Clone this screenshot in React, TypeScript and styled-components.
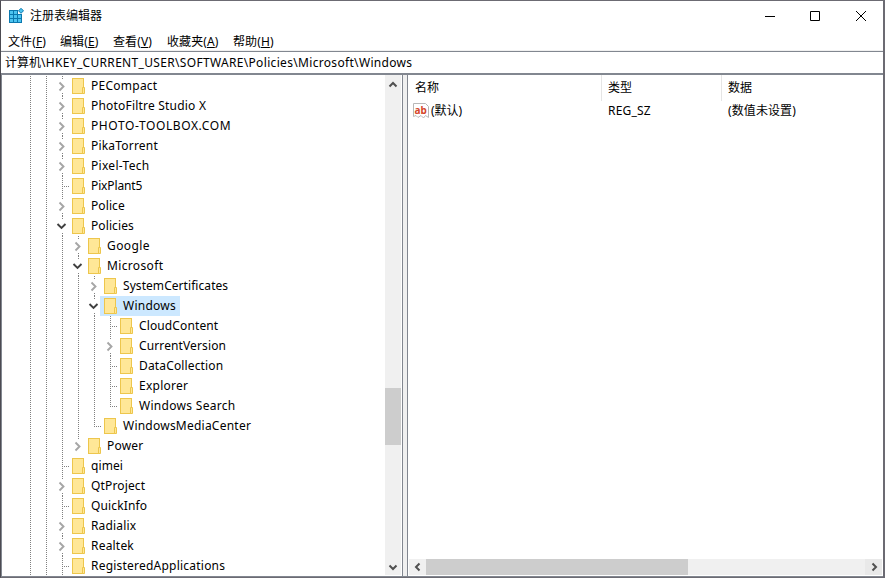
import React from "react";
import styled, { createGlobalStyle } from "styled-components";

const Global = createGlobalStyle`
  * { box-sizing: border-box; }
  body { margin: 0; background: #fff; }
`;

const Window = styled.div`
  width: 885px; height: 578px; display: flex; flex-direction: column; overflow: hidden;
  background: #fff; color: #000; border: 1px solid #6c6b73; border-left-color: #4c4b52;
  border-bottom-width: 1px; border-right-width: 2px;
  font: 12px "Noto Sans", "Noto Sans CJK SC", sans-serif; white-space: nowrap;
`;
const TitleBar = styled.header`
  height: 29px; flex: none; display: flex; align-items: center; padding-left: 7px;
`;
const Title = styled.span`margin-left: 6px; line-height: 29px;`;
const Controls = styled.div`margin-left: auto; margin-right: -1px; display: flex;`;
const Control = styled.button`
  width: 46px; height: 29px; padding: 0; border: 0; background: none;
  display: flex; align-items: center; justify-content: center;
  &:first-child { padding-left: 2px; }
`;
const MenuBar = styled.nav`
  height: 21px; flex: none; display: flex; border-bottom: 1px solid #f0f0f0; padding-left: 7px;
`;
const MenuItem = styled.span<{ $w: number }>`width: ${p => p.$w}px; line-height: 23px; letter-spacing: .1px;`;
const AddressBar = styled.div`
  height: 24px; flex: none; border-top: 1px solid #828790; border-bottom: 2px solid #828790;
  padding-left: 4px; line-height: 21px;
`;
const AddressPath = styled.span`letter-spacing: .325px;`;
const Body = styled.main`flex: 1; min-height: 0; display: flex;`;
const TreePane = styled.section`
  width: 402px; display: flex; border-left: 1px solid #828790; border-right: 1px solid #828790;
  border-bottom: 1px solid #828790; padding: 0 1px 1px 0;
`;
const Tree = styled.div`flex: 1; overflow: hidden; padding: 1px 0 0 12px;`;
const Splitter = styled.div`width: 4px; background: #f0f0f0; border-bottom: 1px solid #828790;`;
const Row = styled.div`height: 20px; display: flex;`;
const Label = styled.span<{ $on?: boolean; $w: number; $gap: number }>`
  height: 20px; line-height: 20px; padding: 0 4px 0 3px;
  background: ${p => (p.$on ? "#cce8ff" : "transparent")};
  span { display: block; width: ${p => p.$w}px; letter-spacing: ${p => p.$gap}px; }
`;
const IconCell = styled.span<{ $on?: boolean }>`
  display: flex; width: 20px; padding: 2px 0 0 4px; background: ${p => (p.$on ? "#cce8ff" : "transparent")};
`;
const VScroll = styled.div`
  width: 16px; background: #f0f0f0; display: flex; flex-direction: column; align-items: center;
`;
const VThumb = styled.div`width: 100%; height: 57px; background: #cdcdcd; margin: 296px 0 auto;`;
const ScrollBtn = styled.div<{ $shade?: boolean }>`
  width: 17px; height: 17px; flex: none; display: flex; align-items: center; justify-content: center;
  background: ${p => (p.$shade ? "#e9e9e9" : "transparent")};
  &:first-child { padding-top: 3px; }
`;
const ListPane = styled.section`
  flex: 1; display: flex; flex-direction: column; border-left: 1px solid #828790;
  border-bottom: 1px solid #828790; padding: 0 1px 1px;
`;
const Columns = styled.div`display: grid; grid-template-columns: 193px 120px 1fr;`;
const HeadCell = styled.div<{ $line?: boolean }>`
  height: 26px; line-height: 25px; padding-left: 6px; border-right: 1px solid ${p => (p.$line ? "#e5e5e5" : "transparent")};
`;
const Cell = styled.div<{ $pad?: number; $gap?: number }>`
  height: 19px; line-height: 19px; padding-left: ${p => p.$pad ?? 6}px; display: flex; align-items: center; gap: 2px;
  letter-spacing: ${p => p.$gap ?? 0}px;
`;
const HScroll = styled.div`
  margin-top: auto; height: 16px; background: #f0f0f0; display: flex;
  ${ScrollBtn} { height: 16px; padding-top: 0; }
`;
const HThumb = styled.div`width: 262px; background: #cdcdcd; margin-right: auto;`;

const chevrons = {
  right: "M3.5 1.5 L7 5 L3.5 8.5", left: "M6.5 1.5 L3 5 L6.5 8.5",
  down: "M1.5 3.5 L5 7 L8.5 3.5", up: "M1.5 6.5 L5 3 L8.5 6.5",
};
const Chevron = ({ dir }: { dir: keyof typeof chevrons }) => (
  <svg width="10" height="10"><path d={chevrons[dir]} fill="none" stroke="#505050" strokeWidth="2" /></svg>
);

const Folder = () => (
  <svg width="14" height="17">
    <rect x=".5" y=".5" width="11" height="15" fill="#ffe797" stroke="#edc64c" />
    <path d="M10.5 15.5V9.5H12.5V15.5Z" fill="#ffe797" stroke="#edc64c" />
  </svg>
);

type Mark = "closed" | "open" | "leaf";
type Node = [name: string, depth: number, mark: Mark, width: number, tracking: number];
const nodes: Node[] = [
  ["PECompact", 0, "closed", 66, .25], ["PhotoFiltre Studio X", 0, "closed", 116, .2],
  ["PHOTO-TOOLBOX.COM", 0, "closed", 140, .6], ["PikaTorrent", 0, "closed", 67, .2],
  ["Pixel-Tech", 0, "closed", 58, .3], ["PixPlant5", 0, "leaf", 51, -.12], ["Police", 0, "closed", 34, .1],
  ["Policies", 0, "open", 43, .1], ["Google", 1, "closed", 43, .4], ["Microsoft", 1, "open", 56, .35],
  ["SystemCertificates", 2, "closed", 105, .06], ["Windows", 2, "open", 53, .25],
  ["CloudContent", 3, "leaf", 79, .12], ["CurrentVersion", 3, "closed", 87, .12],
  ["DataCollection", 3, "leaf", 84, .15], ["Explorer", 3, "leaf", 49, .25], ["Windows Search", 3, "leaf", 96, .3],
  ["WindowsMediaCenter", 2, "leaf", 128, .23], ["Power", 1, "closed", 36, .2], ["qimei", 0, "leaf", 32, .1],
  ["QtProject", 0, "closed", 54, .15], ["QuickInfo", 0, "leaf", 56, .15], ["Radialix", 0, "closed", 45, .15],
  ["Realtek", 0, "closed", 43, .2], ["RegisteredApplications", 0, "leaf", 134, .22],
];

/* Dotted guides: one column per ancestor level, then the node's own branch. */
const Guides = ({ index }: { index: number }) => {
  const [, depth, mark] = nodes[index];
  const own = 48 + depth * 16;
  const lines: [number, number, number][] = [[17, 0, 20], [33, 0, 20]];
  for (let d = 0; d < depth; d++) {
    const more = nodes.slice(index).find(n => n[1] <= d);
    if (!more || more[1] === d || d === 0) lines.push([49 + d * 16, 0, 20]);
  }
  const next = nodes.slice(index + 1).find(n => n[1] <= depth);
  const last = depth > 0 && (!next || next[1] < depth);
  if (mark === "leaf") lines.push([own + 1, 0, last ? 11 : 20]);
  else { lines.push([own + 1, 0, 3]); if (!last) lines.push([own + 1, 17, 20]); }
  return (
    <svg width={own + 6} height="20" overflow="visible" shapeRendering="crispEdges">
      {lines.map(([x, a, b], i) => (
        <path key={i} d={`M${x - .5} ${a}V${b}`} stroke="#808080" strokeDasharray="1 1" />
      ))}
      {mark === "leaf" && <path d={`M${own} 10.5H${own + 7}`} stroke="#808080" strokeDasharray="1 1" />}
      {mark !== "leaf" && (
        <path shapeRendering="auto" fill="none" strokeWidth="1.9"
          stroke={mark === "open" ? "#404040" : "#a6a6a6"}
          d={mark === "open" ? `M${own - 4.5} 8l4 4l4 -4` : `M${own - 2.5} 6.5l4 4l-4 4`} />
      )}
    </svg>
  );
};

const RegIcon = () => (
  <svg width="16" height="16">
    <path d="M1 2H10V6H14V15H1Z" fill="#0b78ae" />
    <path d="M2 3h3v3H2zM6 3h3v3H6zM2 7h3v3H2zM6 7h3v3H6zM10 7h3v3H10zM2 11h3v3H2zM6 11h3v3H6zM10 11h3v3H10z" fill="#4cc4f0" />
    <path d="M13 .3l2.5 2.5l-2.5 2.5l-2.5 -2.5z" fill="#4cc4f0" stroke="#0b78ae" />
  </svg>
);
const StringGlyph = styled.svg`overflow: visible; flex: none;`;
const AbMark = styled.text`font: bold 10px "Noto Sans", sans-serif; letter-spacing: 0;`;
const StringIcon = () => (
  <StringGlyph width="16" height="16">
    <path d="M.5 .5H12.5L15.5 3.5V14.5L12.5 12.5L10.5 15L8 12.5L5 14.5L3 12.5L.5 13.5Z" fill="#fff" stroke="#b8b8b8" />
    <AbMark x="1.5" y="10.5" fill="#d5482b">ab</AbMark>
  </StringGlyph>
);

const menus: [string, string, number][] = [["文件", "F", 52], ["编辑", "E", 53], ["查看", "V", 54], ["收藏夹", "A", 66], ["帮助", "H", 60]];

export default function App() {
  return (
    <Window>
      <Global />
      <TitleBar>
        <RegIcon /><Title>注册表编辑器</Title>
        <Controls>
          <Control><svg width="10" height="10"><path d="M0 5.5H10" stroke="#000" /></svg></Control>
          <Control><svg width="10" height="10"><path d="M.5.5h9v9h-9z" fill="none" stroke="#000" /></svg></Control>
          <Control><svg width="10" height="10"><path d="M0 0L10 10M10 0L0 10" stroke="#000" /></svg></Control>
        </Controls>
      </TitleBar>
      <MenuBar>{menus.map(([t, k, w]) => <MenuItem key={k} $w={w}>{t}(<u>{k}</u>)</MenuItem>)}</MenuBar>
      <AddressBar>计算机<AddressPath>\HKEY_CURRENT_USER\SOFTWARE\Policies\Microsoft\Windows</AddressPath></AddressBar>
      <Body>
        <TreePane>
          <Tree>
            {nodes.map(([name, , , w, gap], i) => (
              <Row key={name}>
                <Guides index={i} />
                <IconCell $on={name === "Windows"}><Folder /></IconCell>
                <Label $on={name === "Windows"} $w={w} $gap={gap}><span>{name}</span></Label>
              </Row>
            ))}
          </Tree>
          <VScroll><ScrollBtn><Chevron dir="up" /></ScrollBtn><VThumb /><ScrollBtn><Chevron dir="down" /></ScrollBtn></VScroll>
        </TreePane>
        <Splitter />
        <ListPane>
          <Columns>
            <HeadCell $line>名称</HeadCell><HeadCell $line>类型</HeadCell><HeadCell>数据</HeadCell>
            <Cell $pad={4}><StringIcon />(默认)</Cell><Cell $gap={.2}>REG_SZ</Cell><Cell $gap={.1}>(数值未设置)</Cell>
          </Columns>
          <HScroll><ScrollBtn><Chevron dir="left" /></ScrollBtn><HThumb /><ScrollBtn $shade><Chevron dir="right" /></ScrollBtn></HScroll>
        </ListPane>
      </Body>
    </Window>
  );
}
